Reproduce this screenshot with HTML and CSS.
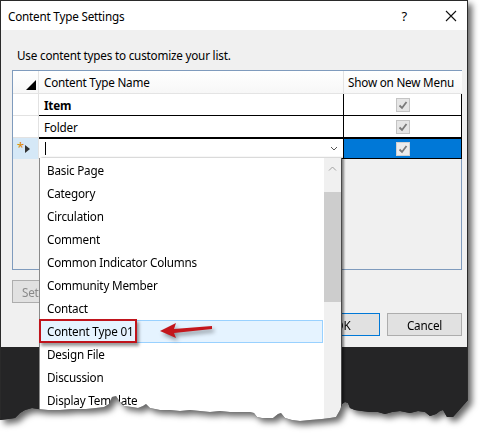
FILE: index.html
```html
<!DOCTYPE html>
<html>
<head>
<meta charset="utf-8">
<link rel="stylesheet" href="styles.css">
</head>
<body>
<div class="frame">
  <div class="window">
    <div class="titlebar">
      <span class="title">Content Type Settings</span>
      <span class="help">?</span>
      <svg class="close" width="12" height="12" viewBox="0 0 12 12"><path d="M1 1 L11 11 M11 1 L1 11" stroke="#111" stroke-width="1.1" fill="none"/></svg>
    </div>
    <div class="body">
      <p class="intro">Use content types to customize your list.</p>
      <div class="grid">
        <div class="row head">
          <div class="rh corner"><svg width="10" height="10" viewBox="0 0 10 10"><path d="M10 0 L10 10 L0 10 Z" fill="#000"/></svg></div>
          <div class="c name">Content Type Name</div>
          <div class="c show">Show on New Menu</div>
        </div>
        <div class="row">
          <div class="rh"></div>
          <div class="c name bold">Item</div>
          <div class="c show"><span class="cb"><svg width="12" height="12" viewBox="0 0 12 12"><path d="M2.5 6.5 L5 9 L9.5 3" stroke="#7a7a7a" stroke-width="1.8" fill="none"/></svg></span></div>
        </div>
        <div class="row">
          <div class="rh"></div>
          <div class="c name">Folder</div>
          <div class="c show"><span class="cb"><svg width="12" height="12" viewBox="0 0 12 12"><path d="M2.5 6.5 L5 9 L9.5 3" stroke="#7a7a7a" stroke-width="1.8" fill="none"/></svg></span></div>
        </div>
        <div class="row newrow">
          <div class="rh newrh">
            <span class="star">*</span>
            <svg width="5" height="8" viewBox="0 0 5 8"><path d="M0 0 L5 4 L0 8 Z" fill="#333"/></svg>
          </div>
          <div class="c name edit">
            <span class="caret"></span>
            <svg class="chev" width="8" height="5" viewBox="0 0 8 5"><path d="M1 1 L4 4 L7 1" stroke="#555" stroke-width="1" fill="none"/></svg>
          </div>
          <div class="c show sel"><span class="cb"><svg width="12" height="12" viewBox="0 0 12 12"><path d="M2.5 6.5 L5 9 L9.5 3" stroke="#7a7a7a" stroke-width="1.8" fill="none"/></svg></span></div>
        </div>
      </div>
      <div class="setrow"><button class="btn set">Set</button></div>
      <div class="actions">
        <button class="btn ok">OK</button>
        <button class="btn">Cancel</button>
      </div>
    </div>
    <div class="dark"></div>

    <div class="dropdown">
      <ul class="items">
        <li>Basic Page</li>
        <li>Category</li>
        <li>Circulation</li>
        <li>Comment</li>
        <li>Common Indicator Columns</li>
        <li>Community Member</li>
        <li>Contact</li>
        <li class="hot">Content Type 01</li>
        <li>Design File</li>
        <li>Discussion</li>
        <li>Display Template</li>
        <li>Document</li>
      </ul>
      <div class="scroll">
        <svg class="up" width="9" height="5" viewBox="0 0 9 5"><path d="M1 4.5 L4.5 1 L8 4.5" stroke="#a0a0a0" stroke-width="1" fill="none"/></svg>
        <div class="thumb"></div>
      </div>
    </div>

    <div class="redbox"></div>
    <svg class="arrow" width="62" height="24" viewBox="0 0 62 24"><polygon points="5,13 21,5 19,11 57,8 57,11 19,15 21,20" fill="#c3161c"/></svg>
  </div>
</div>
</body>
</html>
```

FILE: styles.css
```css
html, body {
  margin: 0;
  padding: 0;
  background: #ffffff;
}
body {
  width: 485px;
  height: 445px;
  overflow: hidden;
  font-family: "Noto Sans", "Open Sans", sans-serif;
  font-size: 11.7px;
  letter-spacing: -0.2px;
  color: #000;
}
.frame {
  width: 468px;
  filter: drop-shadow(4px 4px 3px rgba(0,0,0,0.6));
}
.window {
  position: relative;
  width: 468px;
  height: 428px;
  box-sizing: border-box;
  border: 1px solid #2a2a2a;
  border-bottom: none;
  background: #252526;
  display: flex;
  flex-direction: column;
  clip-path: polygon(0 0, 468px 0, 468px 400px, 453px 417px, 447px 417px, 443px 410px, 440px 411px, 436px 414px, 430px 416px, 425px 412px, 418px 411px, 410px 413px, 400px 411px, 392px 412px, 385px 414px, 378px 412px, 370px 412px, 362px 411px, 355px 410px, 350px 408px, 348px 403px, 345px 402px, 342px 404px, 340px 410px, 336px 417px, 330px 418px, 322px 419px, 310px 420px, 300px 421px, 292px 420px, 285px 418px, 281px 413px, 278px 414px, 273px 418px, 262px 418px, 257px 417px, 254px 413px, 250px 412px, 240px 412px, 230px 412px, 220px 411px, 210px 412px, 200px 411px, 190px 410px, 180px 411px, 170px 410px, 160px 410px, 150px 408px, 146px 404px, 143px 406px, 138px 408px, 132px 407px, 124px 406px, 120px 402px, 116px 396px, 112px 397px, 109px 404px, 104px 407px, 96px 408px, 86px 409px, 72px 409px, 60px 410px, 48px 410px, 38px 409px, 32px 408px, 25px 410px, 20px 413px, 15px 418px, 8px 419px, 0 420px);
}
.titlebar {
  height: 29px;
  flex: none;
  background: #ffffff;
  display: flex;
  align-items: center;
  padding: 0 10px 0 7px;
}
.title {
  flex: 1;
}
.help {
  font-size: 13px;
  margin-right: 38px;
}
.body {
  height: 317px;
  flex: none;
  box-sizing: border-box;
  background: #f0f0f0;
  padding: 17px 5px 0 11px;
}
.intro {
  margin: 0 0 0 5px;
  line-height: 16px;
}
.grid {
  margin-top: 7px;
  height: 200px;
  box-sizing: border-box;
  border: 1px solid #7f9bbd;
  background: #f0f0f0;
}
.row {
  display: grid;
  grid-template-columns: 26px 305px 118px;
  height: 22px;
}
.row > div {
  box-sizing: border-box;
  display: flex;
  align-items: center;
}
.rh {
  background: #ffffff;
  border-right: 1px solid #e2e2e2;
  border-bottom: 1px solid #e2e2e2;
}
.c {
  background: #ffffff;
  border-right: 1px solid #000;
  border-bottom: 1px solid #000;
  padding-left: 5px;
}
.head {
  height: 23px;
}
.head .rh, .head .c {
  background: linear-gradient(#ffffff, #f7f7f7);
  border-bottom: 1px solid #e4e4e4;
  border-right: 1px solid #e4e4e4;
}
.head .show {
  border-right: none;
  justify-content: flex-start;
  padding-left: 4px;
}
.corner {
  justify-content: flex-end;
  padding-right: 2px;
  padding-top: 6px;
}
.bold {
  font-weight: bold;
}
.show {
  justify-content: center;
  padding-left: 0;
}
.cb {
  width: 14px;
  height: 14px;
  box-sizing: border-box;
  border: 1px solid #c4c4c4;
  background: #e6e6e6;
  display: flex;
  align-items: center;
  justify-content: center;
}
.newrow {
  height: 21px;
}
.newrow > .c {
  border-top: 1px solid #000;
}
.newrh {
  background: #d5e8f7;
  border-bottom: none;
  justify-content: flex-start;
  padding-left: 4px;
  gap: 1px;
}
.star {
  color: #e08a00;
  font-size: 13px;
  line-height: 10px;
  margin-top: -4px;
}
.edit {
  justify-content: space-between;
  padding-left: 6px;
  padding-right: 5px;
}
.caret {
  width: 1px;
  height: 13px;
  background: #000;
}
.sel {
  background: #0078d7;
}
.sel .cb {
  background: #ececec;
  border-color: #d0d0d0;
}
.setrow {
  margin-top: 10px;
}
.btn {
  font-family: inherit;
  font-size: 11.7px;
  letter-spacing: -0.2px;
  height: 23px;
  box-sizing: border-box;
  border: 1px solid #adadad;
  background: #e1e1e1;
  padding: 0;
  color: #000;
  width: 75px;
}
.set {
  width: 110px;
  color: #8a8a8a;
  text-align: left;
  padding-left: 9px;
}
.actions {
  margin-top: 10px;
  display: flex;
  justify-content: flex-end;
  gap: 7px;
}
.ok {
  border-color: #0078d7;
}
.dark {
  flex: 1;
  background: #252526;
}
.dropdown {
  position: absolute;
  left: 38px;
  top: 157px;
  width: 303px;
  height: 270px;
  box-sizing: border-box;
  border-left: 1px solid #8a8a8a;
  border-right: 1px solid #4a4a4a;
  background: #ffffff;
  display: flex;
  box-shadow: 2px 0 2px rgba(0,0,0,0.45);
}
.items {
  list-style: none;
  margin: 0;
  padding: 1px 1px 0 0;
  flex: 1;
}
.items li {
  height: 23px;
  line-height: 23px;
  padding-left: 7px;
  box-sizing: border-box;
}
.items li.hot {
  background: #e5f3ff;
  border: 1px solid #99d1ff;
  line-height: 21px;
  padding-left: 6px;
}
.scroll {
  width: 17px;
  flex: none;
  background: #f0f0f0;
  display: flex;
  flex-direction: column;
  align-items: center;
}
.up {
  margin-top: 8px;
}
.thumb {
  margin-top: 21px;
  width: 17px;
  height: 110px;
  background: #cdcdcd;
}
.redbox {
  position: absolute;
  left: 38px;
  top: 318px;
  width: 98px;
  height: 24px;
  box-sizing: border-box;
  border: 2px solid #c0141c;
  box-shadow: 2px 3px 3px rgba(0,0,0,0.4);
}
.arrow {
  position: absolute;
  left: 154px;
  top: 317px;
  filter: drop-shadow(2px 3px 2px rgba(0,0,0,0.4));
}
```
